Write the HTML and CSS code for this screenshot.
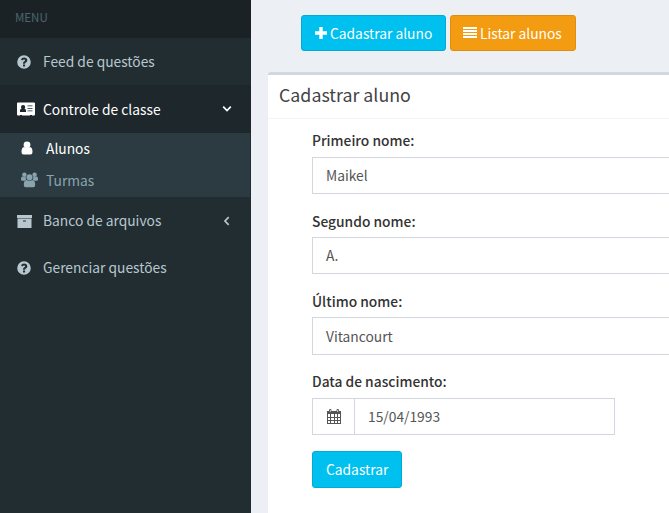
FILE: index.html
```html
<!DOCTYPE html>
<html lang="pt-BR">
<head>
<meta charset="utf-8">
<title>Cadastrar aluno</title>
<link rel="stylesheet" href="styles.css">
</head>
<body>
<svg class="defs" width="0" height="0" aria-hidden="true">
  <symbol id="question" viewBox="0 0 14 14"><path fill-rule="evenodd" d="M7 .2a6.800 6.800 0 1 0 0 13.600A6.800 6.800 0 0 0 7 .2ZM6 9.600h2.100v2H6ZM4 4.500C4.600 3.200 5.600 2.500 7.100 2.500c1.800 0 3.200 1.100 3.200 2.700 0 1.300-.7 1.900-1.500 2.400-.5.300-.7.500-.7 1.100H6c0-1.400.4-1.900 1.300-2.500.6-.4.8-.6.8-1 0-.5-.5-.8-1.100-.8-.7 0-1.100.4-1.600 1.100Z"/></symbol>
</svg>
<div class="app">
  <aside class="sidebar">
    <div class="menu-header">MENU</div>
    <a class="item"><svg class="icon" width="14" height="14"><use href="#question"/></svg><span>Feed de questões</span></a>
    <a class="item active">
      <svg class="icon" width="18" height="14" viewBox="0 0 18 14"><path fill-rule="evenodd" d="M1 .5h16q1 0 1 1v11q0 1-1 1h-2v-.6h-2v.6H5v-.6H3v.6H1q-1 0-1-1v-11q0-1 1-1ZM3 10h6V8.500Q9 7 7.500 6.700q.7-.7.7-1.700A2.100 2.100 0 0 0 4 5q0 1 .6 1.700Q3 7 3 8.500ZM10.500 3.500v.8h5v-.8Zm0 2.500v.8h5V6Zm0 2.500v.8h5v-.8Z"/></svg>
      <span>Controle de classe</span>
      <svg class="arrow" width="10" height="8" viewBox="0 0 10 8"><path d="m1.200 1.700 3.800 3.800 3.800-3.800"/></svg>
    </a>
    <div class="submenu">
      <a class="sub current"><svg class="icon" width="12" height="14" viewBox="0 0 12 14"><circle cx="6" cy="3.800" r="3.400"/><path d="M3 6Q.5 6.300.5 11q0 2.500 2 2.500h7q2 0 2-2.500 0-4.700-2.500-5-3 2-6 0Z"/></svg><span>Alunos</span></a>
      <a class="sub"><svg class="icon" width="17" height="16" viewBox="0 0 17 16"><circle cx="3.400" cy="2.700" r="2.200"/><circle cx="13.600" cy="2.700" r="2.200"/><path d="M1.500 4.500Q0 4.500 0 7.500 0 8.800 1.300 8.800h2.500Q4.700 7.800 5.300 7.600 4.500 6.400 4.800 4.600 3 5.900 1.500 4.500ZM15.500 4.500Q17 4.500 17 7.500q0 1.300-1.300 1.300h-2.500q-.9-1-1.500-1.200.8-1.200.5-3 1.800 1.300 3.300-.1Z"/><circle cx="8.500" cy="5.300" r="3"/><path d="M5.600 8Q2.800 8.200 2.800 13q0 2.200 1.900 2.200h7.600q1.900 0 1.900-2.200 0-4.800-2.800-5-2.900 1.400-5.800 0Z"/></svg><span>Turmas</span></a>
    </div>
    <a class="item shelf"><svg class="icon" width="15" height="13" viewBox="0 0 15 13"><path fill-rule="evenodd" d="M0 0h15v3H0ZM.5 3.500h14V13H.5ZM6 5.500v1h3v-1Z"/></svg><span>Banco de arquivos</span>
      <svg class="arrow left" width="8" height="10" viewBox="0 0 8 10"><path d="M5.700 1.200 2 5l3.700 3.800"/></svg></a>
    <a class="item last"><svg class="icon" width="14" height="14"><use href="#question"/></svg><span>Gerenciar questões</span></a>
  </aside>
  <main class="content">
    <div class="actions">
      <button class="btn info add"><svg width="12" height="12" viewBox="0 0 12 12"><path d="M4.300 0h3.400v4.300H12v3.400H7.700V12H4.300V7.700H0V4.300h4.300Z"/></svg><span>Cadastrar aluno</span></button>
      <button class="btn warning list"><svg width="14" height="12" viewBox="0 0 14 12"><path d="M0 0h14v2H0Zm0 3h14v2H0Zm0 3h14v2H0Zm0 3h14v2H0Z"/></svg><span>Listar alunos</span></button>
    </div>
    <section class="box">
      <h3 class="box-title">Cadastrar aluno</h3>
      <form class="form">
        <label class="first">Primeiro nome:</label>
        <div class="field"><span>Maikel</span></div>
        <label>Segundo nome:</label>
        <div class="field"><span>A.</span></div>
        <label>Último nome:</label>
        <div class="field tall"><span>Vitancourt</span></div>
        <label class="birth">Data de nascimento:</label>
        <div class="date">
          <div class="addon"><svg width="14" height="15" viewBox="0 0 14 15"><path fill-rule="evenodd" d="M0 2h2V1q0-1 1.200-1T4.500 1v1h5V1q0-1 1.200-1T12 1v1h2v13H0ZM1 5v3h2V5Zm3 0v3h3V5Zm4 0v3h2V5Zm3 0v3h2V5ZM1 9v2h2V9Zm3 0v2h3V9Zm4 0v2h2V9Zm3 0v2h2V9ZM1 12v2h2v-2Zm3 0v2h3v-2Zm4 0v2h2v-2Zm3 0v2h2v-2ZM2.900 1v2h.7V1Zm7.500 0v2h.7V1Z"/></svg></div>
          <div class="field"><span>15/04/1993</span></div>
        </div>
        <button class="btn info submit" type="button"><span>Cadastrar</span></button>
      </form>
    </section>
  </main>
</div>
</body>
</html>
```
FILE: styles.css
```css
* { box-sizing: border-box; }
body {
  margin: 0;
  font: 13.800px/20px "Noto Sans CJK SC", "Noto Sans", sans-serif;
  color: #333;
  background: #ecf0f5;
}
.defs { display: block; }
.app { display: flex; height: 513px; overflow: hidden; }
.sidebar { width: 251px; flex: none; background: #222d32; color: #b8c7ce; }
.menu-header { height: 38px; padding: 7px 15px; background: #1a2226; color: #4b646f; font-size: 11.500px; }
.item { display: flex; align-items: center; height: 48px; padding-left: 17px; }
.menu-header + .item { height: 47px; }
.item.last { height: 46px; }
.icon { fill: currentColor; flex: none; }
.item > span { margin-left: auto; width: 208px; flex: none; }
.item .arrow { margin-left: -29px; margin-right: 19px; }
.item .arrow.left { margin-left: -28px; margin-right: 20px; }
.arrow { fill: none; stroke: currentColor; stroke-width: 1.700; flex: none; }
.item.active { background: #1e282c; color: #fff; }
.submenu { width: 250px; height: 64px; background: #2c3b41; color: #8aa4af; }
.sub { display: flex; align-items: center; height: 32px; padding-left: 21px; }
.sub > span { margin-left: auto; width: 204px; }
.sub.current { color: #fff; }
.content { flex: 1; min-width: 0; padding: 15px 0 0 17px; }
.actions { display: flex; gap: 4px; padding-left: 33px; margin-bottom: 21px; }
.btn {
  display: flex; align-items: center; gap: 3px;
  height: 36px; padding: 0 13px;
  border: 1px solid; border-radius: 3px;
  color: #fff; font: inherit; white-space: nowrap;
}
.btn svg { fill: currentColor; flex: none; margin-bottom: 1px; }
.menu-header + .item span, .btn span { padding-bottom: 1px; }
.sub, .shelf > span, .last > span { padding-bottom: 2px; }
.current .icon { margin-bottom: 1px; }
.info { background: #00c0ef; border-color: #00acd6; }
.warning { background: #f39c12; border-color: #e08e0b; }
.add { width: 145px; }
.list { width: 126px; padding-left: 12px; }
.box {
  width: 500px; height: 460px;
  background: #fff; border-top: 3px solid #d2d6de; border-radius: 3px;
  box-shadow: 0 1px 1px rgba(0, 0, 0, .1);
}
.box-title {
  margin: 0; height: 44px; padding: 9px 0 0 11px;
  border-bottom: 1px solid #f4f4f4;
  font-size: 17.800px; line-height: 20px; font-weight: 400; color: #444;
}
.form { padding: 12px 0 0 44px; }
label { display: block; height: 26px; font-weight: 500; }
label.first, label.birth { line-height: 18px; }
.field {
  display: flex; align-items: center; height: 37px;
  padding: 0 0 2px 13px; margin-bottom: 17px;
  border: 1px solid #d2d6de; color: #555;
}
.field.tall { height: 38px; padding-bottom: 0; }
.date { display: flex; width: 303px; margin-bottom: 16px; }
.date .field { flex: 1; margin: 0; }
.addon { display: flex; align-items: center; justify-content: center; width: 42px; border: 1px solid #d2d6de; border-right: 0; }
.addon svg { fill: #555; }
.submit { width: 90px; height: 37px; }
```
